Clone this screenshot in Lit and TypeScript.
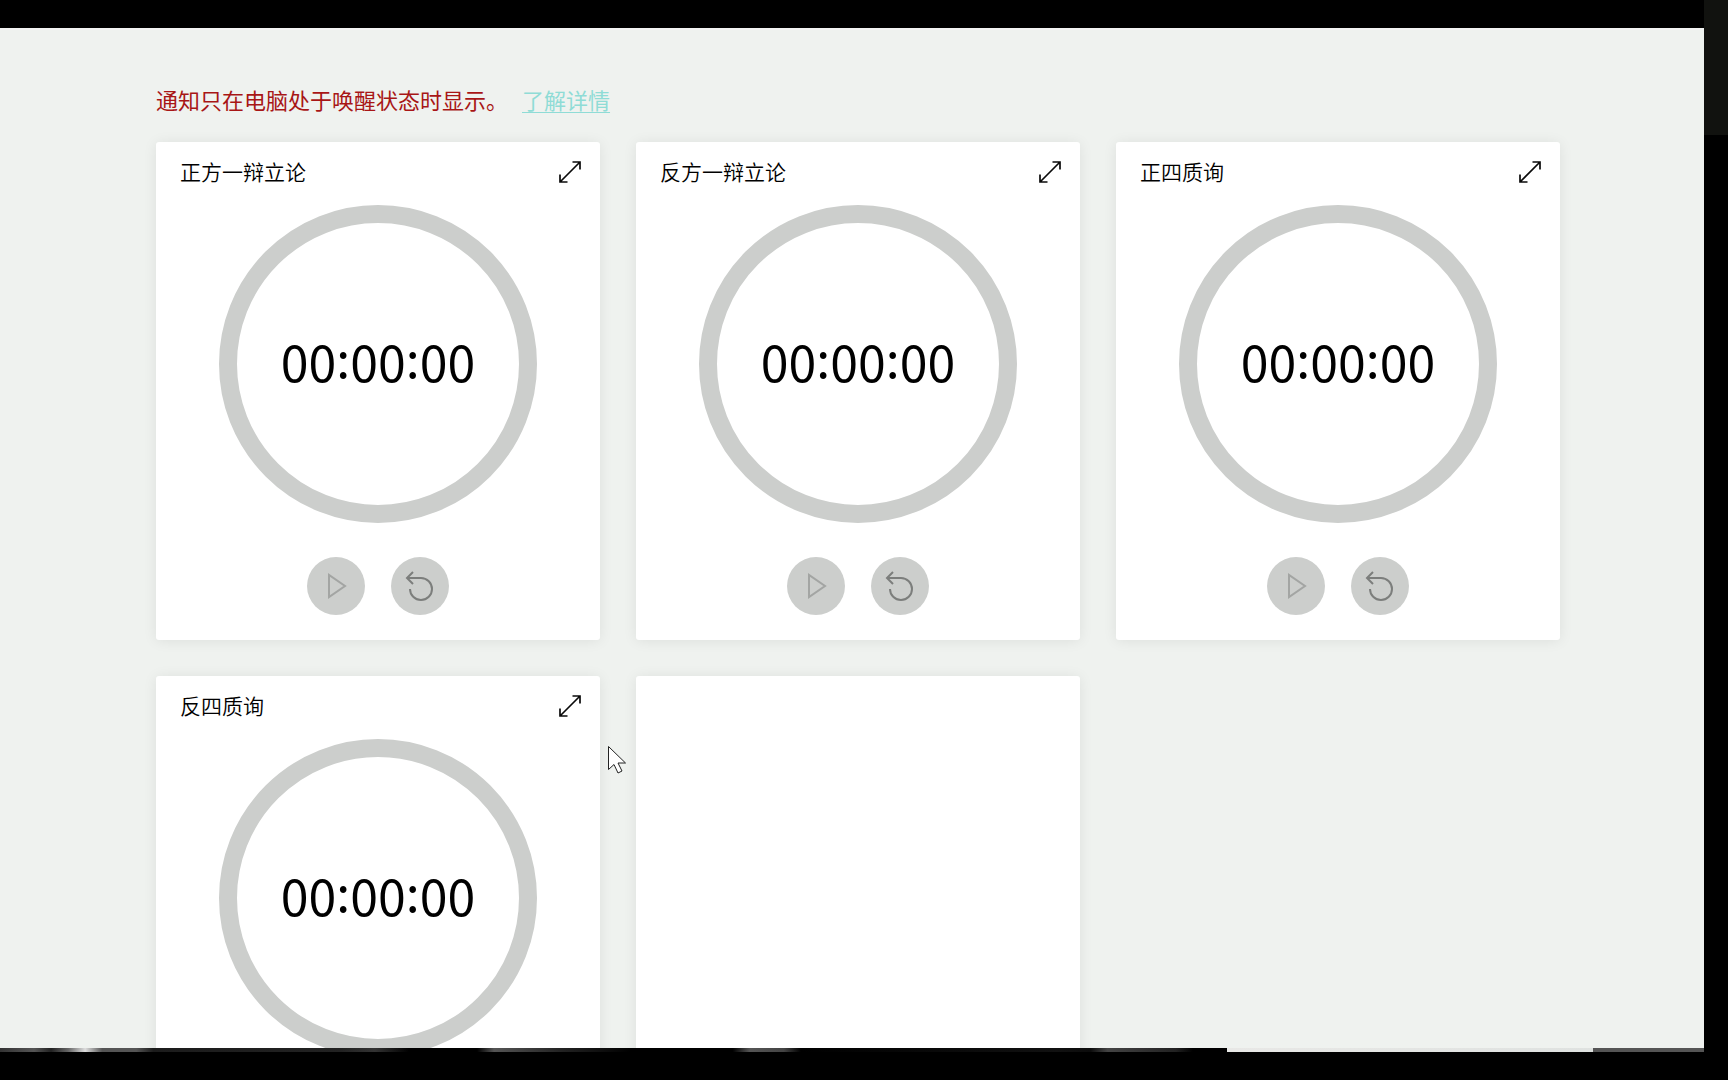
import { LitElement, html, css, svg } from "lit";
import { customElement, property } from "lit/decorators.js";

const expandIcon = svg`<path stroke-width="1.700" d="M2 22 22 2M14.500 2H22v7.500M2 14.500V22h7.500" />`;
const playIcon = svg`<path d="M7 3v22l16-11z" />`;
const resetIcon = svg`<path d="M8 2 2 8l6 6M2 8h14a11 11 0 1 1-11 11" />`;

@customElement("timer-card")
class TimerCard extends LitElement {
  @property() name = "";
  @property() time = "00:00:00";

  static styles = css`
    :host {
      display: flex;
      flex-direction: column;
      align-items: center;
      box-sizing: border-box;
      padding: 14px 16px 25px 24px;
      background: #fff;
      border-radius: 3px;
      box-shadow: 0 1px 14px rgba(0, 0, 0, 0.08);
    }
    .head {
      display: flex;
      align-items: center;
      justify-content: space-between;
      align-self: stretch;
      height: 32px;
    }
    .title {
      margin: 0;
      padding-bottom: 2px;
      font-size: 21px;
      line-height: 30px;
      font-weight: 350;
      color: #000;
    }
    button {
      display: grid;
      place-items: center;
      border: 0;
      padding: 0;
      font: inherit;
      background: none;
    }
    svg {
      display: block;
      fill: none;
      stroke: currentColor;
      stroke-width: 2;
    }
    .expand {
      width: 28px;
      height: 28px;
      color: #0a0a0a;
    }
    .ring {
      display: grid;
      place-items: center;
      box-sizing: border-box;
      width: 318px;
      height: 318px;
      margin: 17px 8px 34px 0;
      padding-bottom: 8px;
      border: 18px solid #cccecc;
      border-radius: 50%;
    }
    .time {
      font-size: 50px;
      line-height: 64px;
      color: #000;
      white-space: nowrap;
    }
    .sep {
      vertical-align: 4px;
      line-height: 1;
    }
    .actions {
      display: flex;
      gap: 26px;
      margin-right: 8px;
    }
    .round {
      width: 58px;
      height: 58px;
      border-radius: 50%;
      background: #cccecc;
      color: #7c7e7c;
    }
    .round:disabled {
      color: #a3a5a3;
    }
  `;

  render() {
    const parts = this.time.split(":");
    return html`
      <div class="head">
        <h2 class="title">${this.name}</h2>
        <button class="expand" aria-label="展开">
          <svg width="24" height="24" viewBox="0 0 24 24">${expandIcon}</svg>
        </button>
      </div>
      <div class="ring">
        <div class="time" role="timer">${parts.map((p, i) => html`${i ? html`<span class="sep">:</span>` : ""}${p}`)}</div>
      </div>
      <div class="actions">
        <button class="round" aria-label="开始" disabled>
          <svg width="28" height="28" viewBox="0 0 28 28">${playIcon}</svg>
        </button>
        <button class="round" aria-label="重置">
          <svg width="30" height="32" viewBox="0 0 30 32">${resetIcon}</svg>
        </button>
      </div>
    `;
  }
}

@customElement("app-root")
class AppRoot extends LitElement {
  static styles = css`
    :host {
      display: grid;
      grid-template-columns: minmax(0, 1fr) 24px;
      height: 100vh;
      overflow: hidden;
      position: relative;
      background: #000;
      font-family: "Noto Sans CJK SC", sans-serif;
    }
    .screen {
      display: flex;
      flex-direction: column;
      min-height: 0;
      padding: 28px 0;
    }
    .page {
      flex: 1;
      min-height: 0;
      overflow: hidden;
      box-sizing: border-box;
      padding: 51px 144px 0 156px;
      background: #eff2ef;
      border-top: 2px solid #f3f4f3;
    }
    .notice {
      display: flex;
      gap: 14px;
      margin: 0 0 25px;
      font-size: 22px;
      line-height: 36px;
      color: #a81616;
    }
    .notice a {
      color: #8fdcd6;
      text-underline-offset: 3px;
      text-decoration-thickness: 1px;
    }
    .grid {
      display: grid;
      grid-template-columns: repeat(3, minmax(0, 1fr));
      gap: 36px;
    }
    .blank {
      background: #fff;
      border-radius: 3px;
      box-shadow: 0 1px 14px rgba(0, 0, 0, 0.08);
    }
    .strip {
      height: 4px;
      background: linear-gradient(
        90deg,
        #333 0, #555 2%, #222 3%, #666 4%, #ddd 5%, #555 6%, #555 8%, #1c1c1c 9%,
        #222 20%, #333 22%, #000 24%, #000 28%, #555 29%, #222 33%, #000 37%, #000 43%,
        #555 44%, #444 46%, #000 47%, #111 62%, #0c0c0c 64%, #444 65%, #222 69%, #000 70%,
        #000 72%, #e8e8e6 72%, #dfe2e0 93.500%, #555 93.500%
      );
    }
    .side {
      background: linear-gradient(#11120f, #11120f) top / 100% 135px no-repeat #000;
    }
    .cursor {
      position: absolute;
      left: 607px;
      top: 745px;
      pointer-events: none;
    }
  `;

  private timers = ["正方一辩立论", "反方一辩立论", "正四质询", "反四质询"];

  render() {
    return html`
      <div class="screen">
        <main class="page">
          <p class="notice"><span>通知只在电脑处于唤醒状态时显示。</span><a href="#">了解详情</a></p>
          <div class="grid">
            ${this.timers.map((n) => html`<timer-card .name=${n}></timer-card>`)}
            <div class="blank"></div>
          </div>
        </main>
        <div class="strip"></div>
      </div>
      <div class="side"></div>
      <svg class="cursor" width="20" height="30" viewBox="0 0 20 30" aria-hidden="true">
        <path d="M1.500 1.500v23l5.500-5 4 8.500 4-2-4-8h7.500z" fill="#fff" stroke="#222" />
      </svg>
    `;
  }
}
